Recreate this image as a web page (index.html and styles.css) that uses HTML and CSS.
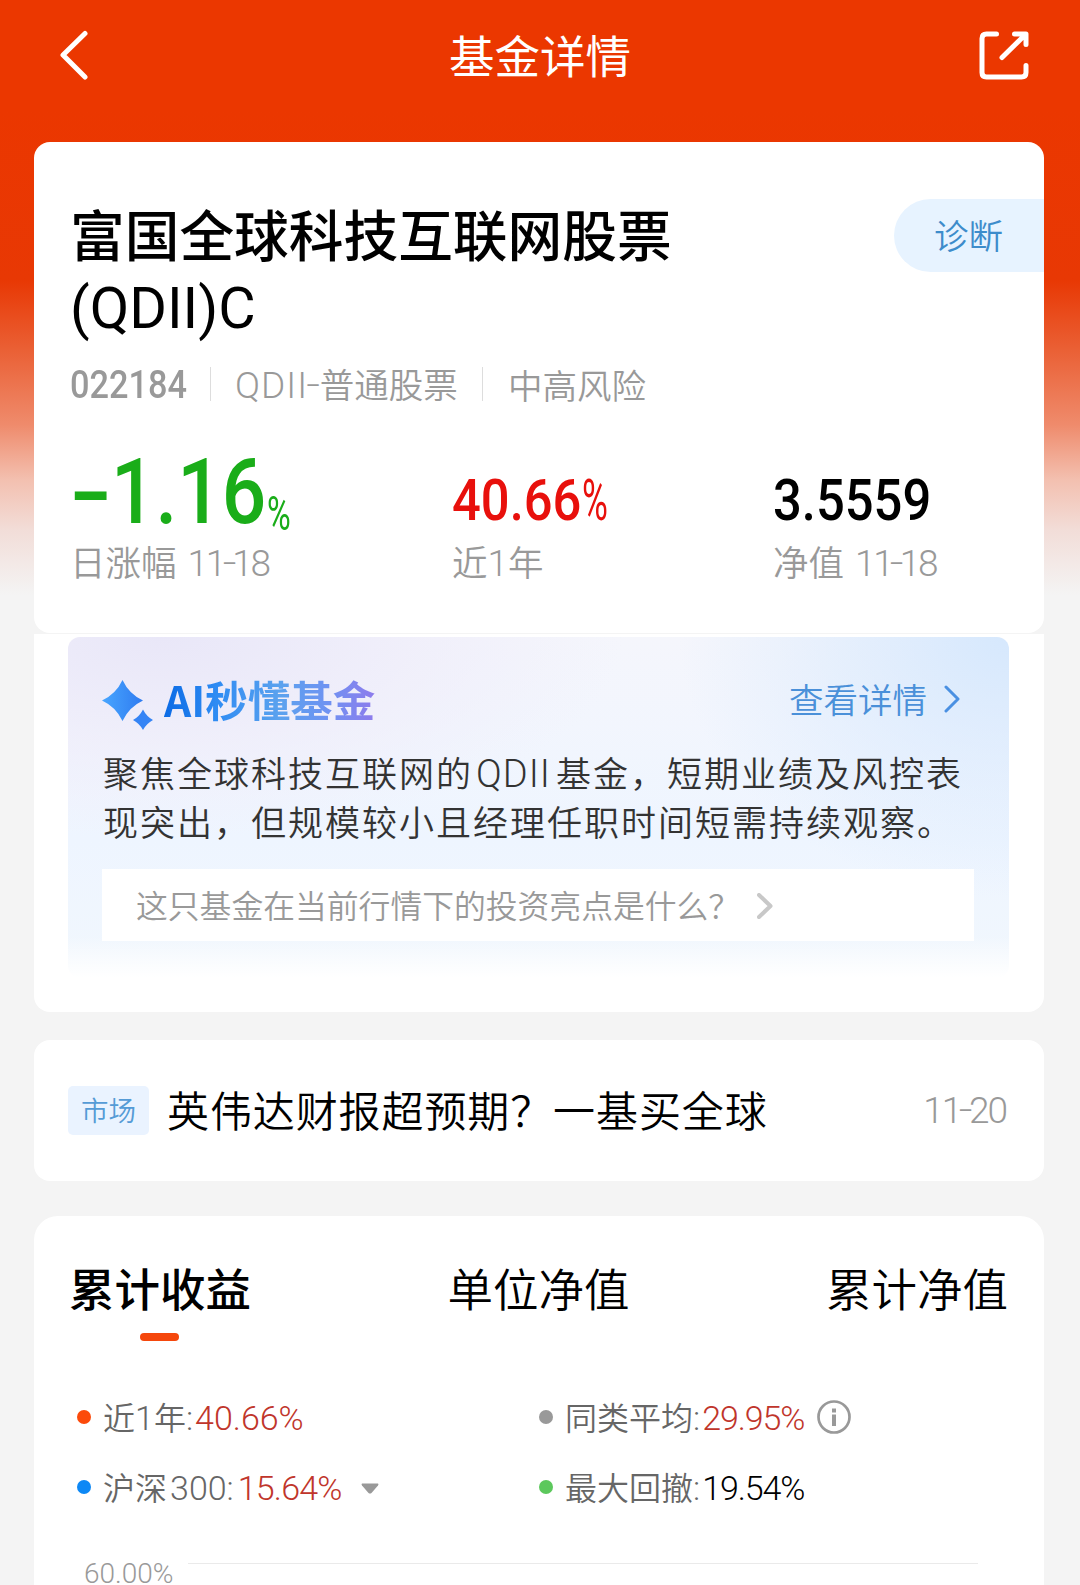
FILE: index.html
```
<!DOCTYPE html>
<html lang="zh-CN">
<head>
  <meta charset="UTF-8">
  <title>基金详情</title>
  <link rel="stylesheet" href="styles.css">
</head>
<body>
  <div class="page">
    <header class="header">
      <svg class="back" viewBox="0 0 30 52"><path d="M25 4.500L3 26L25 48"/></svg>
      <h1>基金详情</h1>
      <svg class="share" viewBox="0 0 52 52"><path d="M18.500 5H8.500Q4 5 4 9.500V43.500Q4 48 8.500 48H43.500Q48 48 48 43.500V36.500M36.500 5H48V15.500M47 6L24 28.500"/></svg>
    </header>

    <section class="card fund">
      <div class="fund-top">
        <h2>富国全球科技互联网股票<br><span class="en">(QDII)C</span></h2>
        <a class="diagnose">诊断</a>
      </div>
      <div class="meta">
        <span class="code"><b>022184</b></span>
        <i class="sep"></i>
        <span class="type"><span class="en">QDII<span class="dash">-</span></span>普通股票</span>
        <i class="sep"></i>
        <span>中高风险</span>
      </div>
      <div class="stats">
        <div class="stat day">
          <div class="value green"><span class="minus">-</span><span class="num">1.16</span><span class="pct">%</span></div>
          <div class="label">日涨幅 <span class="en">11<span class="dash">-</span>18</span></div>
        </div>
        <div class="stat year">
          <div class="value red"><span class="num">40.66</span><span class="pct">%</span></div>
          <div class="label">近<span class="one">1</span>年</div>
        </div>
        <div class="stat net">
          <div class="value"><span class="num">3.5559</span></div>
          <div class="label">净值 <span class="en">11<span class="dash">-</span>18</span></div>
        </div>
      </div>
    </section>

    <section class="ai">
      <div class="ai-panel">
        <div class="ai-head">
          <svg class="stars" viewBox="0 0 52 50">
            <defs>
              <linearGradient id="star">
                <stop offset="0" stop-color="#48a6ff"/>
                <stop offset="1" stop-color="#2f7bf0"/>
              </linearGradient>
            </defs>
            <path fill="url(#star)" d="M20.500 0Q27 14 41 20.500Q27 27 20.500 41Q14 27 0 20.500Q14 14 20.500 0Z"/>
            <path fill="#3584f5" d="M41 29.500Q44.500 36.500 51 40Q44.500 43.500 41 50Q37.500 43.500 31 40Q37.500 36.500 41 29.500Z"/>
          </svg>
          <h3>AI秒懂基金</h3>
          <a class="more">查看详情<svg viewBox="0 0 16 28"><path d="M2 2L14 14L2 26"/></svg></a>
        </div>
        <p>聚焦全球科技互联网的<span class="en">QDII</span>基金，短期业绩及风控表<br>现突出，但规模较小且经理任职时间短需持续观察。</p>
        <div class="ask"><span>这只基金在当前行情下的投资亮点是什么？</span><svg viewBox="0 0 16 26"><path d="M2 2L13.500 13L2 24"/></svg></div>
      </div>
    </section>

    <section class="card news">
      <span class="tag">市场</span>
      <span class="news-title">英伟达财报超预期？一基买全球</span>
      <span class="date">11<span class="dash">-</span>20</span>
    </section>

    <section class="card chart">
      <nav class="tabs">
        <a class="active">累计收益</a>
        <a>单位净值</a>
        <a>累计净值</a>
      </nav>
      <div class="legend">
        <div class="item"><i class="dot orange"></i><span class="name">近<span class="en">1</span>年<span class="en">:</span></span><em>40.66%</em></div>
        <div class="item"><i class="dot gray"></i><span class="name">同类平均<span class="en">:</span></span><em class="tight">29.95%</em>
          <svg class="info" viewBox="0 0 34 34"><circle cx="17" cy="17" r="15.500"/><path d="M17 14.500V26"/><path d="M17 8.500V12.500"/></svg>
        </div>
        <div class="item"><i class="dot blue"></i><span class="name">沪深<span class="en wide">300:</span></span><em class="tight hs">15.64%</em>
          <svg class="arrow" viewBox="0 0 18 11"><path d="M1 0.500H17Q18 1 17 2.500L10.500 10Q9 11 7.500 10L1 2.500Q0 1 1 0.500Z"/></svg>
        </div>
        <div class="item"><i class="dot lime"></i><span class="name">最大回撤<span class="en">:</span></span><em class="tight black">19.54%</em></div>
      </div>
      <div class="axis"><span>60.00%</span><i></i></div>
    </section>
  </div>
</body>
</html>
```

FILE: styles.css
```
* {
  box-sizing: border-box;
  margin: 0;
  padding: 0;
}
body {
  background: #f4f4f4;
  color: #000;
  font-family: "Noto Sans CJK SC", sans-serif;
  font-weight: 350;
  height: 1585px;
  overflow: hidden;
}
i, em {
  font-style: normal;
}
svg {
  fill: none;
  stroke-linecap: round;
  stroke-linejoin: round;
}
.en {
  font-family: Roboto, sans-serif;
}
.dash {
  display: inline-block;
  transform: scaleX(1.3) translateY(-1px);
}
.page {
  height: 1585px;
  padding: 0 36px 0 34px;
  overflow: hidden;
  background: linear-gradient(#eb3700 0, #eb3700 110px, #e83804 280px, #ea6035 350px, #ef8b6c 425px, #f3c0b0 480px, #f2ddd8 530px, #f4f4f4 595px);
}

/* header */
.header {
  height: 142px;
  padding: 29px 14px 0 26px;
  display: flex;
  justify-content: space-between;
  align-items: flex-start;
}
.header h1 {
  margin-top: -1px;
  color: #fff;
  font-size: 45.500px;
  line-height: 52px;
  font-weight: 400;
}
.header svg {
  stroke: #fff;
  stroke-width: 5;
}
.back {
  width: 30px;
  height: 52px;
  margin-right: 12px;
}
.share {
  width: 52px;
  height: 52px;
}

.card {
  background: #fff;
  border-radius: 16px;
}

/* fund summary */
.fund {
  height: 491px;
  padding: 57px 0 0 36px;
}
.fund-top {
  display: flex;
  justify-content: space-between;
  align-items: flex-start;
  height: 146px;
}
.fund h2 {
  margin-top: -2px;
  font-size: 54.700px;
  line-height: 72px;
  font-weight: 450;
}
.fund h2 .en {
  font-size: 57.500px;
  line-height: 68px;
}
.diagnose {
  width: 150px;
  height: 73px;
  padding-left: 40px;
  border-radius: 37px 0 0 37px;
  background: #e7f3ff;
  color: #3d8ccb;
  font-size: 34.500px;
  line-height: 70px;
}
.meta {
  height: 36px;
  margin-top: 21px;
  display: flex;
  align-items: center;
  color: #999;
  font-size: 34.500px;
  line-height: 32px;
}
.meta .en {
  font-size: 37px;
  letter-spacing: 1px;
}
.meta .type {
  width: 223px;
  margin-left: -1px;
}
.code {
  width: 116px;
}
.code b {
  display: inline-block;
  font: 500 39px/34px Roboto, sans-serif;
  transform: scaleX(.88);
  transform-origin: 0 50%;
}
.sep {
  width: 1px;
  height: 34px;
  margin: 0 25px 0 24px;
  background: #ddd;
}
.stats {
  display: flex;
  margin-top: 53px;
}
.day {
  width: 382px;
}
.year {
  width: 321px;
}
.value {
  height: 74px;
  padding-top: 9px;
  display: flex;
  align-items: baseline;
  font: 500 57px/74px Roboto, sans-serif;
}
.value span {
  display: inline-block;
  height: 65px;
  transform-origin: 0 50%;
}
.value .num {
  transform: scaleX(.89);
}
.value .pct {
  font-weight: 400;
  transform: scaleX(.62);
}
.green {
  padding-top: 0;
  color: #1aad19;
  font-size: 91px;
}
.green .minus {
  width: 41px;
  transform: scaleX(1.35);
}
.green .num {
  width: 156px;
  transform: scaleX(.86);
}
.green .pct {
  padding-top: 3px;
  font-size: 49px;
  align-self: flex-start;
  line-height: 112px;
  transform: scaleX(.66);
}
.red {
  color: #e8100c;
}
.red .num {
  width: 130px;
}
.label {
  margin-top: 10px;
  color: #999;
  font-size: 35.500px;
  line-height: 44px;
}
.label .en {
  margin-left: 3px;
  font-size: 37px;
  letter-spacing: -2.300px;
}
.label .one {
  font-family: Roboto, sans-serif;
  font-size: 37px;
}

/* AI summary */
.ai {
  height: 378px;
  margin-top: 1px;
  padding: 3px 35px 0 34px;
  background: #fff;
  border-radius: 0 0 16px 16px;
}
.ai-panel {
  height: 340px;
  padding: 36px 35px 0 34px;
  border-radius: 12px;
  background:
    linear-gradient(rgba(255,255,255,0) 88%, #fff 100%),
    radial-gradient(ellipse 330px 260px at 100% 0, #d6e8fd, rgba(214,232,253,0)),
    radial-gradient(ellipse 460px 200px at 10% 0, #e9e7f8, rgba(239,237,250,.75) 55%, rgba(240,242,252,0)),
    linear-gradient(#f5f6fc, #eef5ff 60%, #f1f7fd);
}
.ai-head {
  height: 56px;
  display: flex;
  align-items: flex-start;
}
.stars {
  width: 52px;
  height: 50px;
  margin-top: 7px;
}
.ai h3 {
  margin: -1px 0 0 10px;
  font-size: 42.500px;
  line-height: 53px;
  font-weight: 700;
  color: transparent;
  background: linear-gradient(90deg, #0c6be5, #2f8cf3 25%, #5ba2ee 55%, #6f92f2 78%, #8e7bec);
  -webkit-background-clip: text;
  background-clip: text;
}
.more {
  margin-left: auto;
  padding-right: 14px;
  display: flex;
  align-items: center;
  color: #4a90d9;
  font-size: 34.500px;
  line-height: 51px;
}
.more svg {
  width: 16px;
  height: 28px;
  margin: 1px 0 0 17px;
  stroke: #4a90e2;
  stroke-width: 3;
}
.ai p {
  height: 140px;
  padding-top: 19px;
  padding-left: 1px;
  color: #333;
  font-size: 35px;
  line-height: 48.500px;
  letter-spacing: 2px;
  white-space: nowrap;
}
.ai p .en {
  display: inline-block;
  width: 83px;
  padding-left: 3px;
  font-size: 38px;
  letter-spacing: 1px;
  line-height: 40px;
}
.ask {
  height: 72px;
  padding-left: 34px;
  display: flex;
  align-items: center;
  background: #fff;
  color: #999;
  font-size: 31.800px;
}
.ask span {
  padding-bottom: 3px;
}
.ask svg {
  width: 16px;
  height: 26px;
  margin: 2px 0 0 17px;
  stroke: #c8c8c8;
  stroke-width: 4;
}

/* market news */
.news {
  height: 141px;
  margin-top: 28px;
  padding: 0 38px 0 34px;
  display: flex;
  align-items: center;
}
.tag {
  width: 81px;
  height: 49px;
  border-radius: 5px;
  background: #eaf3ff;
  color: #559bd6;
  font-size: 27.500px;
  line-height: 46px;
  text-align: center;
}
.news-title {
  margin-left: 18px;
  padding-bottom: 4px;
  font-size: 42px;
  letter-spacing: .9px;
}
.date {
  margin-left: auto;
  color: #999;
  font: 300 37px Roboto, sans-serif;
  letter-spacing: -2px;
}

/* performance */
.chart {
  height: 400px;
  margin-top: 35px;
  border-radius: 24px;
}
.tabs {
  height: 166px;
  padding: 38px 36px 0 35px;
  display: flex;
  justify-content: space-between;
  font-size: 45.500px;
  line-height: 66px;
}
.active {
  font-weight: 450;
}
.active::after {
  content: "";
  display: block;
  width: 39px;
  height: 8px;
  margin: 13px 0 0 71px;
  border-radius: 4px;
  background: #f5470c;
}
.legend {
  padding-left: 43px;
  display: grid;
  grid-template-columns: 462px 1fr;
  grid-auto-rows: 70px;
  color: #666;
  font-size: 32px;
}
.item {
  display: flex;
  align-items: center;
}
.name {
  padding-bottom: 3px;
}
.item .en {
  font-size: 34px;
}
.item .wide {
  margin-left: 3px;
}
.item em {
  margin: 2px 0 0 2px;
  color: #c0352b;
  font: 350 34px Roboto, sans-serif;
}
.item .tight {
  letter-spacing: -1.100px;
}
.item .hs {
  margin-left: 4px;
  letter-spacing: -.800px;
}
.item .black {
  color: #000;
}
.dot {
  width: 14px;
  height: 14px;
  margin-right: 12px;
  border-radius: 50%;
}
.orange {
  background: #fc4a0a;
}
.gray {
  background: #999;
}
.blue {
  background: #0d88f5;
}
.lime {
  background: #5cc85c;
}
.info {
  width: 34px;
  height: 34px;
  margin-left: 13px;
  stroke: #999;
  stroke-width: 2.700;
}
.info path {
  stroke-width: 4;
  stroke-linecap: butt;
}
.arrow {
  width: 18px;
  height: 11px;
  margin: 3px 0 0 19px;
  fill: #999;
}
.axis {
  display: flex;
  align-items: flex-start;
  padding-left: 50px;
  margin-top: 41px;
  color: #999;
  font: 300 28px/22px Roboto, sans-serif;
}
.axis span {
  width: 104px;
}
.axis i {
  width: 790px;
  height: 1px;
  background: #eaeaea;
}
```
